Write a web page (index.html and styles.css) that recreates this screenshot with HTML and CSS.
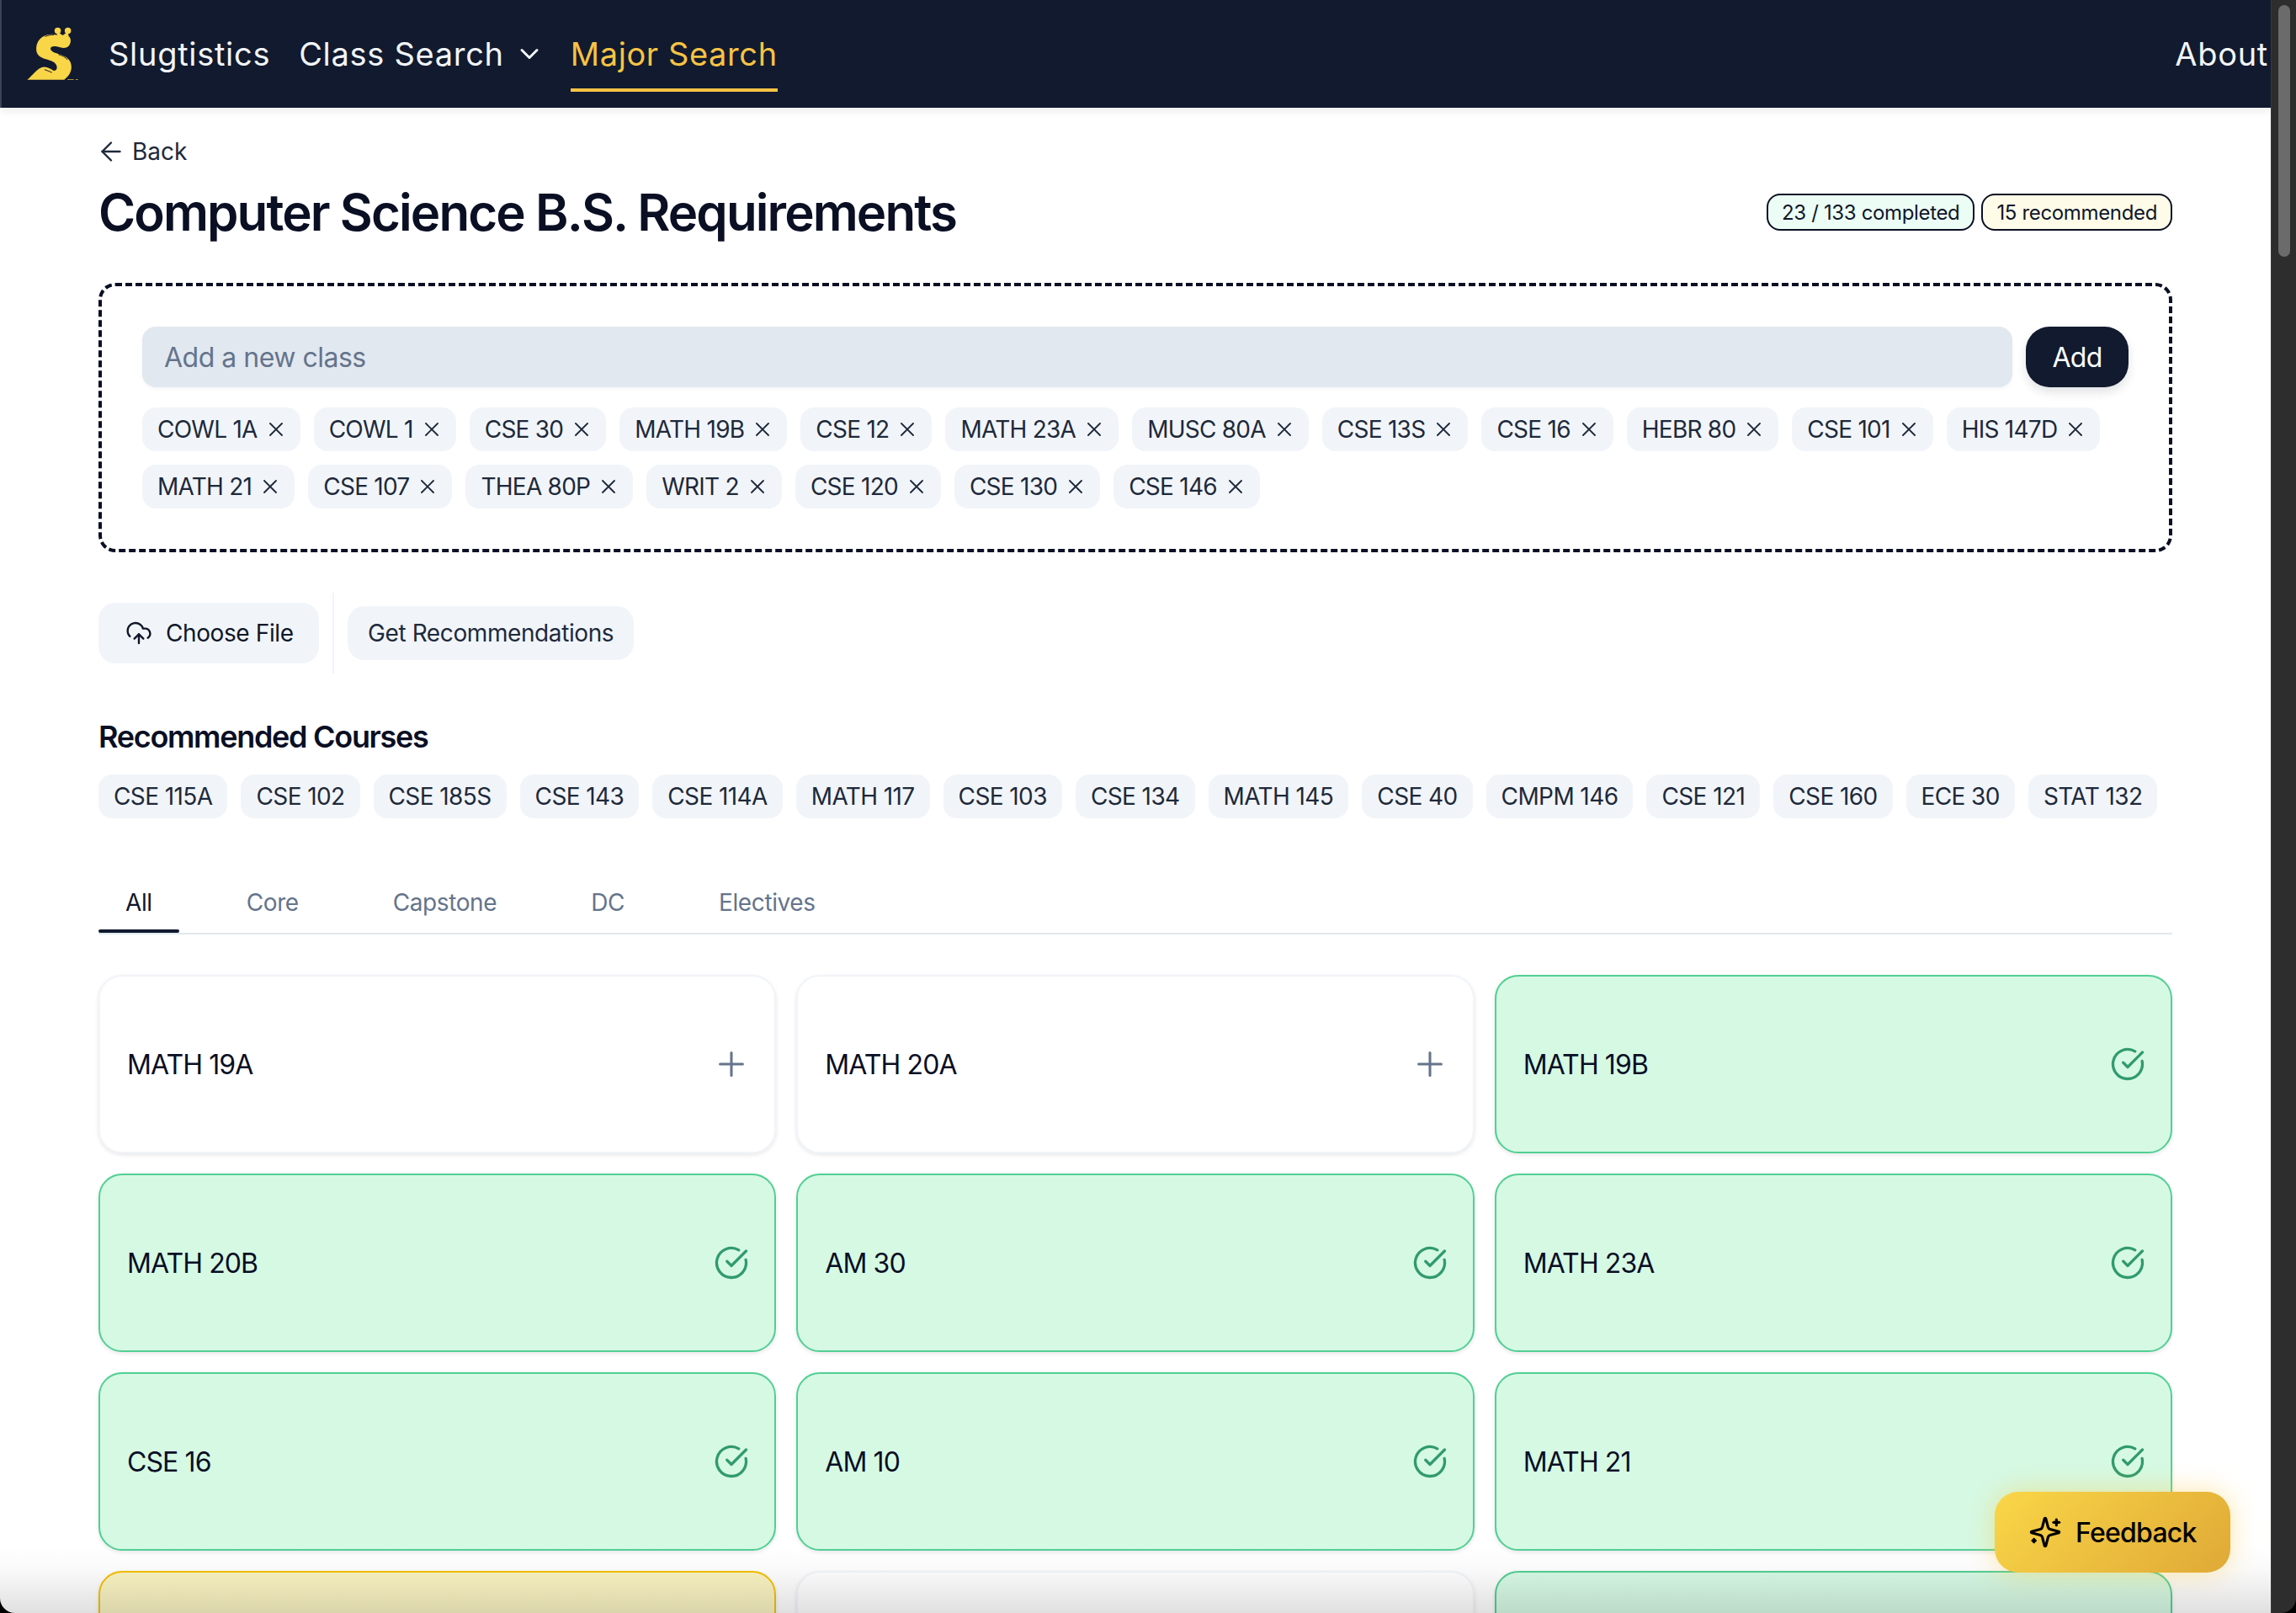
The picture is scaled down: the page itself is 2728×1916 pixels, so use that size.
FILE: index.html
```html
<!DOCTYPE html>
<html lang="en">
<head>
<meta charset="utf-8">
<title>Computer Science B.S. Requirements</title>
<link rel="stylesheet" href="styles.css">
</head>
<body>
<div class="window">
  <div class="page">
    <nav class="navbar">
      <svg class="logo" viewBox="96 95 190 195" aria-hidden="true">
        <circle cx="208" cy="108" r="11.5" fill="#f9d548"/>
        <circle cx="245" cy="108" r="11.5" fill="#f9d548"/>
        <path fill="#f9d548" d="M97 287C115 272 130 250 147 243C165 235 180 247 192 253C204 256 208 243 203 233C197 220 180 217 165 212C142 205 129 195 130 172C131 145 150 125 178 122C190 121 198 122 204 125L208 112L226 125L245 112L248 128C258 135 258 155 246 166C236 175 218 170 205 166C193 163 181 165 182 174C183 184 197 188 212 193C240 201 258 215 258 240C258 262 245 275 232 287Z"/>
        <path fill="none" stroke="#111a2e" stroke-width="3" stroke-linecap="round" d="M163 129C172 125 183 123 194 123M212 195C224 198 236 204 243 213M161 250C168 252 177 256 186 260"/>
        <path fill="none" stroke="#f9d548" stroke-width="2" d="M245 286H265M274 286H281"/>
      </svg>
      <a class="nav-link">Slugtistics</a>
      <a class="nav-link nav-drop">Class Search
        <svg class="chev" viewBox="0 0 24 24"><path d="m6 9 6 6 6-6"/></svg>
      </a>
      <a class="nav-link nav-active">Major Search</a>
      <a class="nav-link nav-about">About</a>
    </nav>

    <main class="content">
      <a class="back">
        <svg class="back-icon" viewBox="0 0 24 24"><path d="m12 19-7-7 7-7"/><path d="M19 12H5"/></svg>
        Back
      </a>
      <header class="title-row">
        <h1 class="title">Computer Science B.S. Requirements</h1>
        <div class="badges">
          <span class="badge badge-green">23 / 133 completed</span>
          <span class="badge badge-yellow">15 recommended</span>
        </div>
      </header>

      <section class="dropbox">
        <div class="add-row">
          <div class="input">Add a new class</div>
          <button class="add-btn">Add</button>
        </div>
        <div class="tags">
          <span class="tag">COWL 1A<svg viewBox="0 0 24 24"><path d="M18 6 6 18M6 6l12 12"/></svg></span>
          <span class="tag">COWL 1<svg viewBox="0 0 24 24"><path d="M18 6 6 18M6 6l12 12"/></svg></span>
          <span class="tag">CSE 30<svg viewBox="0 0 24 24"><path d="M18 6 6 18M6 6l12 12"/></svg></span>
          <span class="tag">MATH 19B<svg viewBox="0 0 24 24"><path d="M18 6 6 18M6 6l12 12"/></svg></span>
          <span class="tag">CSE 12<svg viewBox="0 0 24 24"><path d="M18 6 6 18M6 6l12 12"/></svg></span>
          <span class="tag">MATH 23A<svg viewBox="0 0 24 24"><path d="M18 6 6 18M6 6l12 12"/></svg></span>
          <span class="tag">MUSC 80A<svg viewBox="0 0 24 24"><path d="M18 6 6 18M6 6l12 12"/></svg></span>
          <span class="tag">CSE 13S<svg viewBox="0 0 24 24"><path d="M18 6 6 18M6 6l12 12"/></svg></span>
          <span class="tag">CSE 16<svg viewBox="0 0 24 24"><path d="M18 6 6 18M6 6l12 12"/></svg></span>
          <span class="tag">HEBR 80<svg viewBox="0 0 24 24"><path d="M18 6 6 18M6 6l12 12"/></svg></span>
          <span class="tag">CSE 101<svg viewBox="0 0 24 24"><path d="M18 6 6 18M6 6l12 12"/></svg></span>
          <span class="tag">HIS 147D<svg viewBox="0 0 24 24"><path d="M18 6 6 18M6 6l12 12"/></svg></span>
          <span class="tag">MATH 21<svg viewBox="0 0 24 24"><path d="M18 6 6 18M6 6l12 12"/></svg></span>
          <span class="tag">CSE 107<svg viewBox="0 0 24 24"><path d="M18 6 6 18M6 6l12 12"/></svg></span>
          <span class="tag">THEA 80P<svg viewBox="0 0 24 24"><path d="M18 6 6 18M6 6l12 12"/></svg></span>
          <span class="tag">WRIT 2<svg viewBox="0 0 24 24"><path d="M18 6 6 18M6 6l12 12"/></svg></span>
          <span class="tag">CSE 120<svg viewBox="0 0 24 24"><path d="M18 6 6 18M6 6l12 12"/></svg></span>
          <span class="tag">CSE 130<svg viewBox="0 0 24 24"><path d="M18 6 6 18M6 6l12 12"/></svg></span>
          <span class="tag">CSE 146<svg viewBox="0 0 24 24"><path d="M18 6 6 18M6 6l12 12"/></svg></span>
        </div>
      </section>

      <div class="actions">
        <button class="btn btn-file">
          <svg class="cloud" viewBox="0 0 24 24"><path d="M12 13v8"/><path d="M4 14.899A7 7 0 1 1 15.71 8h1.79a4.5 4.5 0 0 1 2.5 8.242"/><path d="m8 17 4-4 4 4"/></svg>
          Choose File
        </button>
        <span class="divider"></span>
        <button class="btn btn-rec">Get Recommendations</button>
      </div>

      <h2 class="subhead">Recommended Courses</h2>
      <div class="rec-tags">
        <span class="rec">CSE 115A</span>
        <span class="rec">CSE 102</span>
        <span class="rec">CSE 185S</span>
        <span class="rec">CSE 143</span>
        <span class="rec">CSE 114A</span>
        <span class="rec">MATH 117</span>
        <span class="rec">CSE 103</span>
        <span class="rec">CSE 134</span>
        <span class="rec">MATH 145</span>
        <span class="rec">CSE 40</span>
        <span class="rec">CMPM 146</span>
        <span class="rec">CSE 121</span>
        <span class="rec">CSE 160</span>
        <span class="rec">ECE 30</span>
        <span class="rec">STAT 132</span>
      </div>

      <div class="tabs">
        <span class="tab tab-active">All</span>
        <span class="tab">Core</span>
        <span class="tab">Capstone</span>
        <span class="tab">DC</span>
        <span class="tab">Electives</span>
      </div>

      <div class="cards">
        <div class="card">MATH 19A<svg class="plus" viewBox="0 0 24 24"><path d="M5 12h14"/><path d="M12 5v14"/></svg></div>
        <div class="card">MATH 20A<svg class="plus" viewBox="0 0 24 24"><path d="M5 12h14"/><path d="M12 5v14"/></svg></div>
        <div class="card card-done">MATH 19B<svg class="check" viewBox="0 0 24 24"><path d="M21.801 10A10 10 0 1 1 17 3.335"/><path d="m9 11 3 3L22 4"/></svg></div>
        <div class="card card-done">MATH 20B<svg class="check" viewBox="0 0 24 24"><path d="M21.801 10A10 10 0 1 1 17 3.335"/><path d="m9 11 3 3L22 4"/></svg></div>
        <div class="card card-done">AM 30<svg class="check" viewBox="0 0 24 24"><path d="M21.801 10A10 10 0 1 1 17 3.335"/><path d="m9 11 3 3L22 4"/></svg></div>
        <div class="card card-done">MATH 23A<svg class="check" viewBox="0 0 24 24"><path d="M21.801 10A10 10 0 1 1 17 3.335"/><path d="m9 11 3 3L22 4"/></svg></div>
        <div class="card card-done">CSE 16<svg class="check" viewBox="0 0 24 24"><path d="M21.801 10A10 10 0 1 1 17 3.335"/><path d="m9 11 3 3L22 4"/></svg></div>
        <div class="card card-done">AM 10<svg class="check" viewBox="0 0 24 24"><path d="M21.801 10A10 10 0 1 1 17 3.335"/><path d="m9 11 3 3L22 4"/></svg></div>
        <div class="card card-done">MATH 21<svg class="check" viewBox="0 0 24 24"><path d="M21.801 10A10 10 0 1 1 17 3.335"/><path d="m9 11 3 3L22 4"/></svg></div>
        <div class="card card-rec"></div>
        <div class="card"></div>
        <div class="card card-done"></div>
      </div>
    </main>

    <div class="fade"></div>
    <button class="feedback">
      <svg class="spark" viewBox="0 0 24 24"><path d="M9.937 15.5A2 2 0 0 0 8.5 14.063l-6.135-1.582a.5.5 0 0 1 0-.962L8.5 9.936A2 2 0 0 0 9.937 8.5l1.582-6.135a.5.5 0 0 1 .963 0L14.063 8.5A2 2 0 0 0 15.5 9.937l6.135 1.581a.5.5 0 0 1 0 .964L15.5 14.063a2 2 0 0 0-1.437 1.437l-1.582 6.135a.5.5 0 0 1-.963 0z"/><path d="M20 3v4"/><path d="M22 5h-4"/><path d="M4 17v2"/><path d="M5 18H3"/></svg>
      Feedback
    </button>
  </div>
  <div class="scrollbar"><div class="thumb"></div></div>
</div>
</body>
</html>
```

FILE: styles.css
```css
* { box-sizing: border-box; }
html, body { margin: 0; height: 100%; background: #000; }
body { overflow: hidden; font-family: Inter, "Liberation Sans", sans-serif; color: #0f172a; }
svg { fill: none; stroke: currentColor; stroke-linecap: round; stroke-linejoin: round; flex: none; }
button { font: inherit; border: 0; }

.window { display: flex; width: 2728px; height: 1916px; border-radius: 0 0 18px 18px; overflow: hidden; }
.page { position: relative; width: 2698px; height: 1916px; background: #fff; overflow: hidden; }
.scrollbar { width: 30px; height: 100%; background: #2d2d2d; padding: 6px 7px 0 8px; border-left: 1px solid #3a3a3a; }
.thumb { height: 299px; border-radius: 8px; background: #6b6b6b; }

.navbar { display: flex; align-items: center; height: 128px; background: #111a2e; border-left: 2px solid #3d4356; padding-left: 30px; box-shadow: 0 4px 10px rgba(15,23,42,.08); position: relative; z-index: 1; }
.logo { width: 62px; height: 64px; stroke: none; margin-right: 35px; }
.nav-link { position: relative; font-size: 38px; line-height: 48px; letter-spacing: .7px; color: #f1f5f9; white-space: nowrap; }
.nav-drop { display: flex; align-items: center; margin-left: 34px; }
.chev { width: 36px; height: 36px; stroke-width: 2; margin-left: 12px; }
.nav-active { margin-left: 31px; letter-spacing: .6px; color: #f6c344; }
.nav-active::after { content: ""; position: absolute; left: 0; right: 0; top: 65px; height: 4px; background: #f6c344; }
.nav-about { margin-left: auto; margin-right: 3px; }

.content { padding: 36px 117px 0 117px; }
.back { display: flex; align-items: center; height: 32px; font-size: 28px; color: #1e293b; }
.back-icon { width: 36px; height: 36px; stroke-width: 1.6; margin-left: -3px; margin-right: 7px; }
.title-row { display: flex; align-items: center; justify-content: space-between; height: 72px; margin-top: 20px; }
.title { margin: 0; font-size: 60px; line-height: 72px; font-weight: 600; letter-spacing: -1.9px; color: #0a0f24; }
.badges { display: flex; gap: 8px; }
.badge { display: flex; align-items: center; height: 44px; padding: 0 16px; border: 2px solid #0a0f24; border-radius: 16px; font-size: 24px; letter-spacing: -.35px; }
.badge-green { background: #ecfdf5; }
.badge-yellow { background: #fefce8; }

.dropbox { margin-top: 48px; border: 4px dashed #0a0f24; border-radius: 20px; padding: 48px; }
.add-row { display: flex; gap: 16px; }
.input { flex: 1; height: 72px; display: flex; align-items: center; padding-left: 26px; background: #e2e8f0; border-radius: 16px; font-size: 32px; letter-spacing: -.5px; color: #64748b; box-shadow: 0 2px 4px rgba(15,23,42,.04); }
.add-btn { width: 122px; height: 72px; border-radius: 28px; background: #111a2e; color: #fff; font-size: 32px; letter-spacing: -.8px; box-shadow: 0 6px 12px rgba(15,23,42,.12); }
.tags { display: flex; flex-wrap: wrap; gap: 16px; margin-top: 24px; }
.tag { display: flex; align-items: center; gap: 8px; height: 52px; padding: 0 15px 0 18px; background: #f1f5f9; border-radius: 16px; font-size: 28px; letter-spacing: -.75px; color: #1e293b; }
.tag svg { width: 28px; height: 28px; stroke-width: 1.6; }

.actions { display: flex; align-items: center; gap: 16px; height: 96px; margin-top: 48px; }
.btn { display: flex; align-items: center; background: #f1f5f9; border-radius: 20px; font-size: 28px; letter-spacing: -.4px; color: #1e293b; }
.btn-file { height: 72px; width: 262px; padding-left: 32px; gap: 16px; color: #0f172a; }
.cloud { width: 32px; height: 32px; stroke-width: 1.8; }
.btn-rec { height: 64px; padding: 0 24px; }
.divider { width: 2px; height: 96px; background: #f1f5f9; }

.subhead { margin: 53px 0 0; font-size: 36px; line-height: 44px; font-weight: 600; letter-spacing: -1.3px; color: #0a0f24; }
.rec-tags { display: flex; gap: 16px; margin-top: 23px; }
.rec { display: flex; align-items: center; height: 52px; padding: 0 18px; background: #f1f5f9; border-radius: 16px; font-size: 28px; letter-spacing: -.6px; color: #1e293b; white-space: nowrap; }

.tabs { display: flex; gap: 48px; margin-top: 64px; border-bottom: 2px solid #e2e8f0; }
.tab { position: relative; height: 72px; padding: 0 32px; display: flex; align-items: center; font-size: 28px; letter-spacing: -.4px; color: #64748b; }
.tab-active { color: #0f172a; }
.tab-active::after { content: ""; position: absolute; left: 0; right: 0; bottom: 0; height: 4px; border-radius: 2px; background: #111a2e; }

.cards { display: grid; grid-template-columns: repeat(3, 1fr); grid-auto-rows: 212px; gap: 24px; margin-top: 48px; }
.card { display: flex; align-items: center; justify-content: space-between; padding: 0 28px 0 32px; background: #fff; border: 2px solid #f1f5f9; border-radius: 28px; font-size: 32px; letter-spacing: -.9px; color: #0a0f24; box-shadow: 0 2px 5px rgba(15,23,42,.1); }
.card-done { background: #d6f9e4; border-color: #52cf94; }
.card-rec { background: #f9f3c2; border-color: #f5c000; }
.plus { width: 46px; height: 46px; stroke: #64748b; stroke-width: 1.6; }
.check { width: 42px; height: 42px; stroke: #319b6d; stroke-width: 1.9; margin-right: 2px; }

.fade { position: absolute; left: 0; right: 0; bottom: 0; height: 80px; background: linear-gradient(rgba(0,0,0,0), rgba(0,0,0,.02) 35%, rgba(0,0,0,.12)); pointer-events: none; }
.feedback { position: absolute; left: 2370px; top: 1772px; display: flex; align-items: center; gap: 16px; width: 280px; height: 96px; padding-left: 40px; border-radius: 28px; background: linear-gradient(135deg, #fad648, #dfa936); color: #000; font-size: 32px; font-weight: 500; letter-spacing: -.75px; box-shadow: 0 0 32px rgba(250,200,60,.45); }
.spark { width: 40px; height: 40px; stroke-width: 1.9; }
```
